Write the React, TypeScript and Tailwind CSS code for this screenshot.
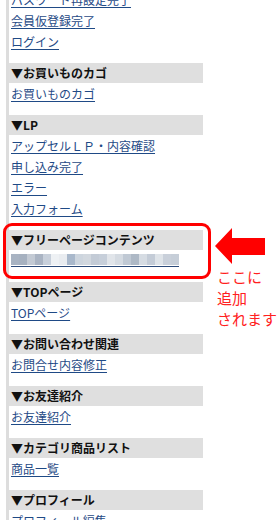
const sections: { title: string | null; links: string[] }[] = [
  { title: null, links: ["パスワード再設定完了", "会員仮登録完了", "ログイン"] },
  { title: "お買いものカゴ", links: ["お買いものカゴ"] },
  { title: "LP", links: ["アップセルＬＰ・内容確認", "申し込み完了", "エラー", "入力フォーム"] },
  { title: "フリーページコンテンツ", links: ["__mosaic__"] },
  { title: "TOPページ", links: ["TOPページ"] },
  { title: "お問い合わせ関連", links: ["お問合せ内容修正"] },
  { title: "お友達紹介", links: ["お友達紹介"] },
  { title: "カテゴリ商品リスト", links: ["商品一覧"] },
  { title: "プロフィール", links: ["プロフィール編集"] },
];

// pixelated (blurred) link text
const mosaic = [
  "#a8b3c2", "#a6b1c0", "#c3cad4", "#aab4c3", "#c8d0db", "#eef1f4", "#e9ecf0",
  "#a9b8cb", "#cdd5de", "#d2d8df", "#c3cbd6", "#c7cfda", "#e1e5ea", "#d5dbe2",
  "#c0c9d4", "#aeb9c6", "#d6dce3", "#c4ccd7", "#dfe4e9", "#c9d0da", "#c6ced8",
];

export default function App() {
  return (
    <div className="relative h-[520px] overflow-hidden bg-white pl-[6px] font-['Noto_Sans_CJK_JP','Noto_Sans',sans-serif]">
      <div className="-mt-[11px] border-l-[3px] border-[#dddddd] pb-4">
        {sections.map((s, i) => (
          <div key={i} className="mb-[11px]">
            {s.title && (
              <div className="h-[20px] w-[194px] bg-[#dfdfdf] pl-[2px] text-[12px] font-bold leading-[20px] text-[#111]">
                ▼{s.title}
              </div>
            )}
            <ul>
              {s.links.map((l) => (
                <li key={l} className="h-[21px] pl-[2px] text-[12px] leading-[21px]">
                  {l === "__mosaic__" ? (
                    <div className="flex h-[21px] flex-col justify-end pb-[4px]">
                      <div className="flex h-[11px]">
                        {mosaic.map((c, j) => (
                          <div key={j} className="h-full w-[8px]" style={{ background: c }} />
                        ))}
                      </div>
                      <div className="mt-[1px] h-[1px] w-[168px] bg-[#2b4a7a]" />
                    </div>
                  ) : (
                    <a href="#" className="text-[#1f4a86] underline underline-offset-[2px]">
                      {l}
                    </a>
                  )}
                </li>
              ))}
            </ul>
          </div>
        ))}
      </div>

      {/* annotation overlay */}
      <div className="absolute left-[3px] top-[223px] h-[56px] w-[208px] rounded-[9px] border-[3px] border-[#ff0000]" />
      <svg className="absolute left-[215px] top-[228px]" width="50" height="36" viewBox="0 0 50 36">
        <polygon points="0,18 17,0 17,10 50,10 50,27 17,27 17,36" fill="#ff0000" />
      </svg>
      <div className="absolute left-[217px] top-[266px] whitespace-nowrap text-[15px] leading-[21px] text-[#ff2020]">
        ここに
        <br />
        追加
        <br />
        されます
      </div>
    </div>
  );
}
